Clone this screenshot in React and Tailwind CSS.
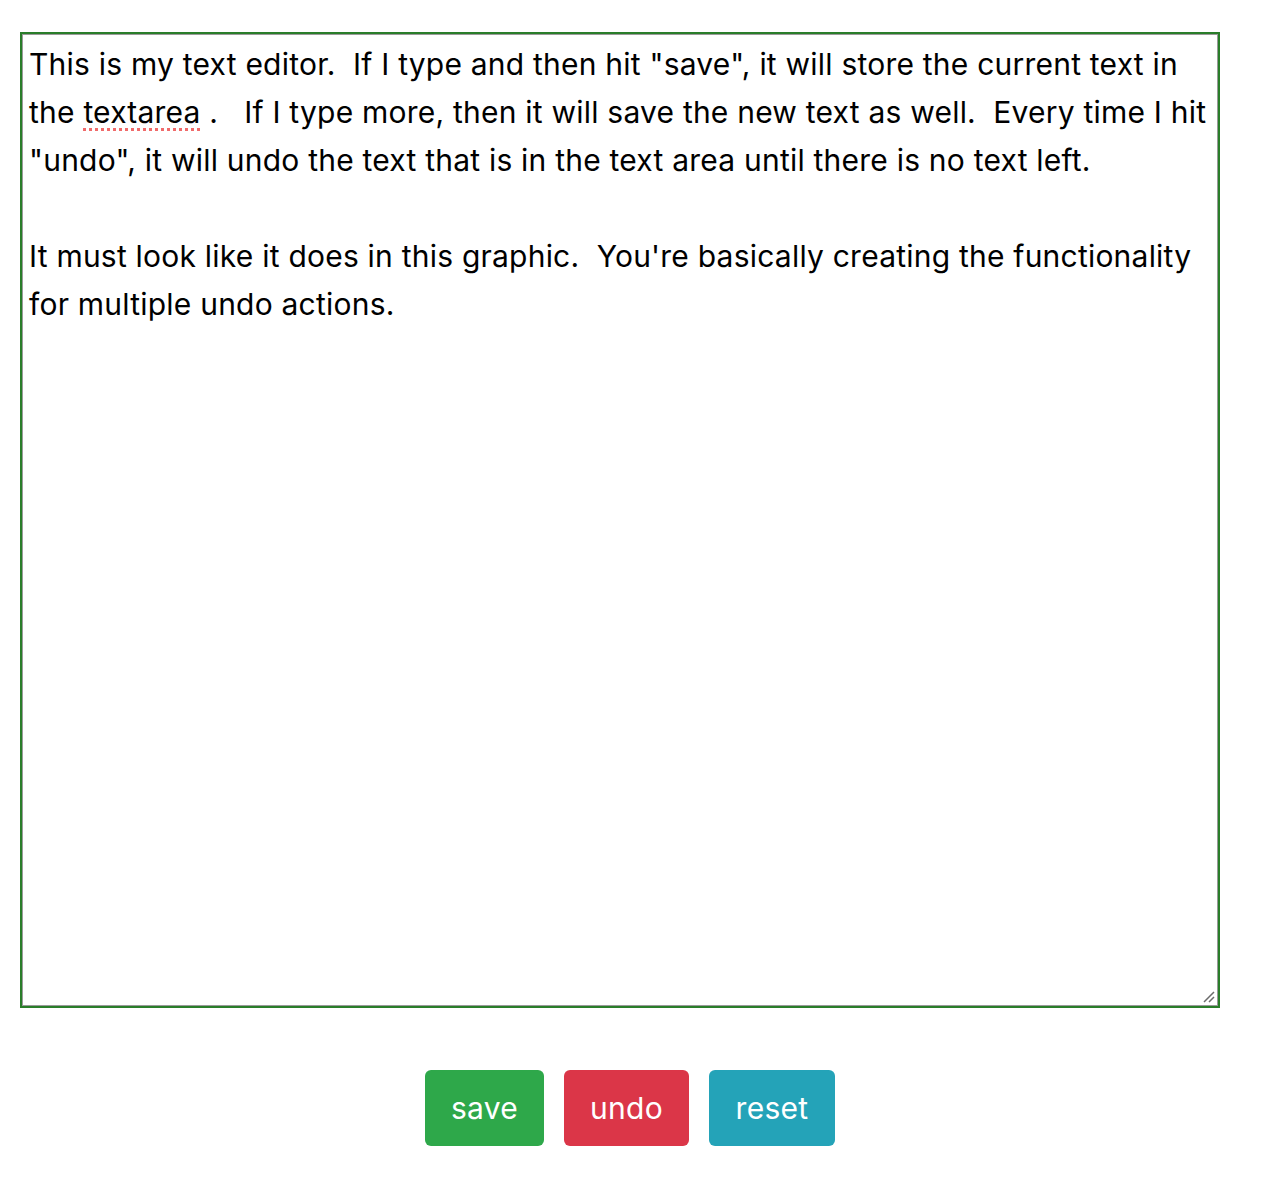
import React from 'react';

const BTN = 'h-[76px] rounded-[6px] text-white text-[30px] leading-none tracking-[0.3px]';

export default function App() {
  return (
    <div className="min-h-[1194px] bg-white font-['Inter',sans-serif] text-black">
      <div className="pt-[32px] pl-[20px]">
        <div className="w-[1200px] h-[976px] border-2 border-[#2a7d2a] relative">
          <div className="h-full border border-[#9a9a9a] pl-[6px] pr-[2px] pt-[5px] text-[30px] leading-[48px] tracking-[0.22px] whitespace-pre-wrap">
            {'This is my text editor.  If I type and then hit "save", it will store the current text in the '}
            <span className="underline decoration-dotted decoration-[#f06a6a] decoration-[3px] underline-offset-[5px]">textarea</span>
            {' .   If I type more, then it will save the new text as well.  Every time I hit "undo", it will undo the text that is in the text area until there is no text left.\n\nIt must look like it does in this graphic.  You\'re basically creating the functionality for multiple undo actions.'}
          </div>
          <svg className="absolute right-[3px] bottom-[3px]" width="12" height="12" viewBox="0 0 12 12">
            <path d="M1 11 L11 1 M6 11 L11 6" stroke="#6b6b6b" strokeWidth="1.5" />
          </svg>
        </div>
      </div>
      <div className="mt-[62px] flex justify-center gap-[20px] pr-[4px]">
        <button className={`${BTN} w-[119px] bg-[#2ea84a]`}>save</button>
        <button className={`${BTN} w-[125px] bg-[#db3648]`}>undo</button>
        <button className={`${BTN} w-[126px] bg-[#24a3b8]`}>reset</button>
      </div>
    </div>
  );
}
